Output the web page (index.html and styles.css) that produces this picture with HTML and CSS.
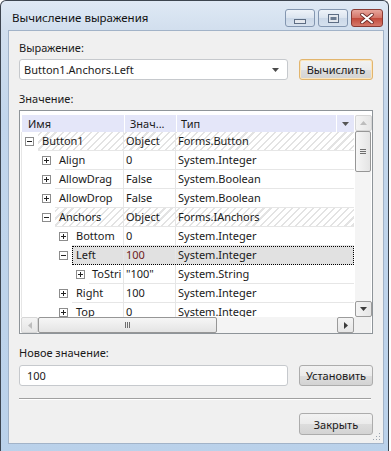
FILE: index.html
```html
<!DOCTYPE html>
<html lang="ru">
<head>
  <meta charset="UTF-8">
  <title>Вычисление выражения</title>
  <link rel="stylesheet" href="styles.css">
</head>
<body>
  <svg class="defs" width="0" height="0">
    <symbol id="exp-minus" viewBox="0 0 9 9">
      <rect x="0.5" y="0.5" width="8" height="8" fill="#fff" stroke="#8c8c8c"/>
      <path d="M2 4.5h5" stroke="#222"/>
    </symbol>
    <symbol id="exp-plus" viewBox="0 0 9 9">
      <rect x="0.5" y="0.5" width="8" height="8" fill="#fff" stroke="#8c8c8c"/>
      <path d="M2 4.5h5M4.5 2v5" stroke="#222"/>
    </symbol>
  </svg>

  <div class="window">
    <div class="titlebar">
      <span class="title">Вычисление выражения</span>
      <div class="caption-buttons">
        <span class="cap-btn">
          <svg width="12" height="5"><rect x="0.5" y="0.5" width="11" height="4" fill="#e4e8ee" stroke="#5d6d84"/></svg>
        </span>
        <span class="cap-btn">
          <svg width="11" height="9"><rect x="0.5" y="0.5" width="10" height="8" fill="#e4e8ee" stroke="#5d6d84"/><rect x="2.5" y="3" width="6" height="3" fill="#6c7c92"/></svg>
        </span>
        <span class="cap-btn close">
          <svg width="14" height="11"><path d="M2 1.5l10 8M12 1.5l-10 8" stroke="#6b2a26" stroke-width="3.6" stroke-linecap="round"/><path d="M2 1.5l10 8M12 1.5l-10 8" stroke="#fff" stroke-width="2" stroke-linecap="round"/></svg>
        </span>
      </div>
    </div>

    <div class="client">
      <div class="field-label">Выражение:</div>
      <div class="field-row">
        <div class="combo">
          <span>Button1.Anchors.Left</span>
          <svg width="7" height="4"><path d="M0 0h7l-3.5 4z" fill="#4a4a4a"/></svg>
        </div>
        <button class="btn btn-default">Вычислить</button>
      </div>

      <div class="field-label">Значение:</div>
      <div class="grid">
        <div class="grid-main">
          <div class="grid-header">
            <div class="hcell h-name">Имя</div>
            <div class="hcell h-value">Знач...</div>
            <div class="hcell h-type">Тип</div>
            <div class="hcell h-filter">
              <svg width="7" height="4"><path d="M0 0h7l-3.5 4z" fill="#555"/></svg>
            </div>
          </div>
          <div class="grid-body">
            <div class="row lvl-0">
              <div class="indent"><svg class="exp"><use href="#exp-minus"/></svg></div>
              <div class="node hatched"><span class="c-name">Button1</span><span class="c-value">Object</span><span class="c-type">Forms.Button</span></div>
            </div>
            <div class="row lvl-1">
              <div class="indent"><svg class="exp"><use href="#exp-plus"/></svg></div>
              <div class="node"><span class="c-name">Align</span><span class="c-value">0</span><span class="c-type">System.Integer</span></div>
            </div>
            <div class="row lvl-1">
              <div class="indent"><svg class="exp"><use href="#exp-plus"/></svg></div>
              <div class="node"><span class="c-name">AllowDrag</span><span class="c-value">False</span><span class="c-type">System.Boolean</span></div>
            </div>
            <div class="row lvl-1">
              <div class="indent"><svg class="exp"><use href="#exp-plus"/></svg></div>
              <div class="node"><span class="c-name">AllowDrop</span><span class="c-value">False</span><span class="c-type">System.Boolean</span></div>
            </div>
            <div class="row lvl-1">
              <div class="indent"><svg class="exp"><use href="#exp-minus"/></svg></div>
              <div class="node hatched"><span class="c-name">Anchors</span><span class="c-value">Object</span><span class="c-type">Forms.IAnchors</span></div>
            </div>
            <div class="row lvl-2">
              <div class="indent"><svg class="exp"><use href="#exp-plus"/></svg></div>
              <div class="node"><span class="c-name">Bottom</span><span class="c-value">0</span><span class="c-type">System.Integer</span></div>
            </div>
            <div class="row lvl-2">
              <div class="indent"><svg class="exp"><use href="#exp-minus"/></svg></div>
              <div class="node selected"><span class="c-name">Left</span><span class="c-value changed">100</span><span class="c-type">System.Integer</span></div>
            </div>
            <div class="row lvl-3">
              <div class="indent"><svg class="exp"><use href="#exp-plus"/></svg></div>
              <div class="node"><span class="c-name">ToStri</span><span class="c-value">"100"</span><span class="c-type">System.String</span></div>
            </div>
            <div class="row lvl-2">
              <div class="indent"><svg class="exp"><use href="#exp-plus"/></svg></div>
              <div class="node"><span class="c-name">Right</span><span class="c-value">100</span><span class="c-type">System.Integer</span></div>
            </div>
            <div class="row lvl-2">
              <div class="indent"><svg class="exp"><use href="#exp-plus"/></svg></div>
              <div class="node"><span class="c-name">Top</span><span class="c-value">0</span><span class="c-type">System.Integer</span></div>
            </div>
          </div>
        </div>

        <div class="vscroll">
          <div class="sb-btn disabled">
            <svg width="7" height="4"><path d="M0 4h7l-3.5-4z" fill="#bdbdbd"/></svg>
          </div>
          <div class="sb-thumb v-thumb">
            <svg width="6" height="5"><path d="M0 0.5h6M0 2.5h6M0 4.5h6" stroke="#6e6e6e"/></svg>
          </div>
          <div class="sb-track"></div>
          <div class="sb-btn">
            <svg width="7" height="4"><path d="M0 0h7l-3.5 4z" fill="#3c3c3c"/></svg>
          </div>
        </div>

        <div class="hscroll">
          <div class="sb-btn disabled">
            <svg width="4" height="7"><path d="M4 0v7l-4-3.5z" fill="#bdbdbd"/></svg>
          </div>
          <div class="sb-thumb h-thumb">
            <svg width="5" height="6"><path d="M0.5 0v6M2.5 0v6M4.5 0v6" stroke="#6e6e6e"/></svg>
          </div>
          <div class="sb-track"></div>
          <div class="sb-btn">
            <svg width="4" height="7"><path d="M0 0v7l4-3.5z" fill="#3c3c3c"/></svg>
          </div>
        </div>
        <div class="corner"></div>
      </div>

      <div class="field-label label-new">Новое значение:</div>
      <div class="field-row">
        <div class="text-input">100</div>
        <button class="btn">Установить</button>
      </div>

      <div class="separator"></div>

      <div class="footer">
        <button class="btn btn-close">Закрыть</button>
      </div>

      <svg class="grip" width="8" height="8">
        <path d="M6 0h1v1h-1zM3 3h1v1h-1zM6 3h1v1h-1zM0 6h1v1h-1zM3 6h1v1h-1zM6 6h1v1h-1z" fill="#9aa4b0"/>
      </svg>
    </div>
  </div>
</body>
</html>
```

FILE: styles.css
```css
html, body {
  margin: 0;
  padding: 0;
  background: #fff;
}
body {
  font-family: "Noto Sans", "Liberation Sans", sans-serif;
  font-size: 11px;
  color: #1a1a1a;
  overflow: hidden;
}
.defs {
  position: absolute;
}

/* окно */
.window {
  width: 389px;
  height: 460px;
  box-sizing: border-box;
  border: 1px solid #3d4550;
  border-bottom: none;
  border-radius: 6px 6px 0 0;
  padding: 0 4px 0 7px;
  background: linear-gradient(#dfe9f5, #d2dfee 28px, #c2d6ec 120px, #bad1ea);
}
.titlebar {
  height: 29px;
  display: flex;
  align-items: flex-start;
  justify-content: space-between;
}
.title {
  font-size: 11.5px;
  color: #111;
  margin: 9px 0 0 4px;
}
.caption-buttons {
  display: flex;
  gap: 3px;
  margin: 8px 1px 0 0;
}
.cap-btn {
  width: 30px;
  height: 18px;
  box-sizing: border-box;
  border: 1px solid #8396b0;
  border-radius: 3px;
  background: linear-gradient(#eef3f9, #dbe4ef 50%, #cbd8e8 51%, #d6e1ee);
  display: flex;
  align-items: center;
  justify-content: center;
}
.cap-btn:first-child svg {
  margin-top: 6px;
}
.cap-btn.close {
  width: 32px;
  border-color: #8a3a33;
  background: linear-gradient(#e8a69c, #d47467 50%, #c2493a 51%, #d5796b);
}

/* клиентская область */
.client {
  position: relative;
  height: 414px;
  box-sizing: border-box;
  border: 1px solid #a2b3c8;
  background: #f0f0f0;
  padding: 10px 10px 0 10px;
}
.field-label {
  line-height: 14px;
  height: 14px;
  margin-bottom: 4px;
}
.field-row {
  display: flex;
  justify-content: space-between;
  align-items: flex-start;
  margin-bottom: 12px;
}
.combo, .text-input {
  width: 269px;
  height: 21px;
  box-sizing: border-box;
  border: 1px solid #c6c9cd;
  border-radius: 3px;
  background: #fff;
  display: flex;
  align-items: center;
  justify-content: space-between;
  padding: 0 8px 0 4px;
}
.text-input {
  padding-left: 7px;
}
.btn {
  font-family: inherit;
  font-size: 11px;
  color: #1a1a1a;
  width: 74px;
  height: 21px;
  padding: 0;
  box-sizing: border-box;
  border: 1px solid #acacac;
  border-radius: 3px;
  background: linear-gradient(#f2f2f2, #ebebeb 50%, #dddddd 51%, #d3d3d3);
}
.btn-default {
  border-color: #e2b56d;
  box-shadow: inset 0 0 0 1px #fbe6bd;
}
.btn-close {
  height: 22px;
}

/* дерево значений */
.grid {
  height: 224px;
  box-sizing: border-box;
  border: 1px solid #8e9499;
  background: #fff;
  padding: 4px 1px 0 1px;
  display: grid;
  grid-template-columns: 333px 17px;
  grid-template-rows: 202px 16px;
}
.grid-main {
  overflow: hidden;
}
.grid-header {
  height: 17px;
  display: flex;
  background: #e4e6f9;
  margin-left: 1px;
}
.hcell {
  line-height: 17px;
  border-right: 1px solid #fff;
  white-space: nowrap;
  overflow: hidden;
}
.h-name { width: 96px; padding-left: 6px; }
.h-value { width: 46px; padding-left: 5px; }
.h-type { width: 155px; padding-left: 4px; }
.h-filter {
  flex: 1;
  border-right: none;
  display: flex;
  align-items: center;
  justify-content: center;
}
.grid-body {
  height: 185px;
  overflow: hidden;
}
.row {
  display: flex;
  height: 19px;
}
.indent {
  flex: none;
  display: flex;
  align-items: center;
  justify-content: flex-end;
  padding-right: 2px;
  box-sizing: border-box;
  border-left: 1px solid #e6e6e6;
}
.exp {
  width: 9px;
  height: 9px;
  margin-right: 2px;
}
.lvl-0 .indent { width: 17px; }
.lvl-1 .indent { width: 34px; }
.lvl-2 .indent { width: 51px; }
.lvl-3 .indent { width: 68px; }
.node {
  flex: 1;
  display: flex;
  line-height: 18px;
  border-bottom: 1px solid #e6e6e6;
  white-space: nowrap;
}
.c-name {
  box-sizing: border-box;
  padding-left: 4px;
  overflow: hidden;
  border-right: 1px solid #e6e6e6;
}
.lvl-0 .c-name { width: 86px; }
.lvl-1 .c-name { width: 69px; }
.lvl-2 .c-name { width: 52px; }
.lvl-3 .c-name { width: 35px; padding-left: 3px; }
.c-value {
  width: 52px;
  box-sizing: border-box;
  padding-left: 2px;
  overflow: hidden;
  border-right: 1px solid #e6e6e6;
}
.c-type {
  flex: 1;
  padding-left: 2px;
}
.c-value.changed {
  color: #6d1b1b;
}
.hatched {
  background: repeating-linear-gradient(135deg, #fff 0 2px, #e3e3e3 2px 3.5px, #fff 3.5px 5px);
}
.selected {
  background: #e1e1e1;
  outline: 1px dotted #000;
  outline-offset: -1px;
}

/* полосы прокрутки */
.vscroll, .hscroll {
  display: flex;
  background: #f4f4f4;
}
.vscroll {
  flex-direction: column;
  margin-left: 1px;
}
.hscroll {
  grid-column: 1;
}
.sb-btn {
  flex: none;
  width: 17px;
  height: 16px;
  box-sizing: border-box;
  border: 1px solid #9b9b9b;
  border-radius: 2px;
  background: linear-gradient(90deg, #f4f4f4, #e6e6e6);
  display: flex;
  align-items: center;
  justify-content: center;
}
.hscroll .sb-btn {
  width: 17px;
  background: linear-gradient(#f4f4f4, #e6e6e6);
}
.sb-btn.disabled {
  border-color: #d6d6d6;
}
.sb-track {
  flex: 1;
}
.sb-thumb {
  flex: none;
  box-sizing: border-box;
  border: 1px solid #969696;
  border-radius: 2px;
  display: flex;
  align-items: center;
  justify-content: center;
}
.v-thumb {
  height: 41px;
  background: linear-gradient(90deg, #f6f6f6, #e4e4e4);
}
.h-thumb {
  width: 179px;
  background: linear-gradient(#f6f6f6, #e4e4e4);
}
.corner {
  background: #f0f0f0;
}

.label-new {
  margin-top: 12px;
  margin-bottom: 5px;
}
.separator {
  margin-right: 2px;
  border-top: 1px solid #a0a0a0;
  border-bottom: 1px solid #fff;
  height: 0;
}
.footer {
  display: flex;
  justify-content: flex-end;
  margin-top: 13px;
}
.grip {
  position: absolute;
  right: 2px;
  bottom: 2px;
}
```
